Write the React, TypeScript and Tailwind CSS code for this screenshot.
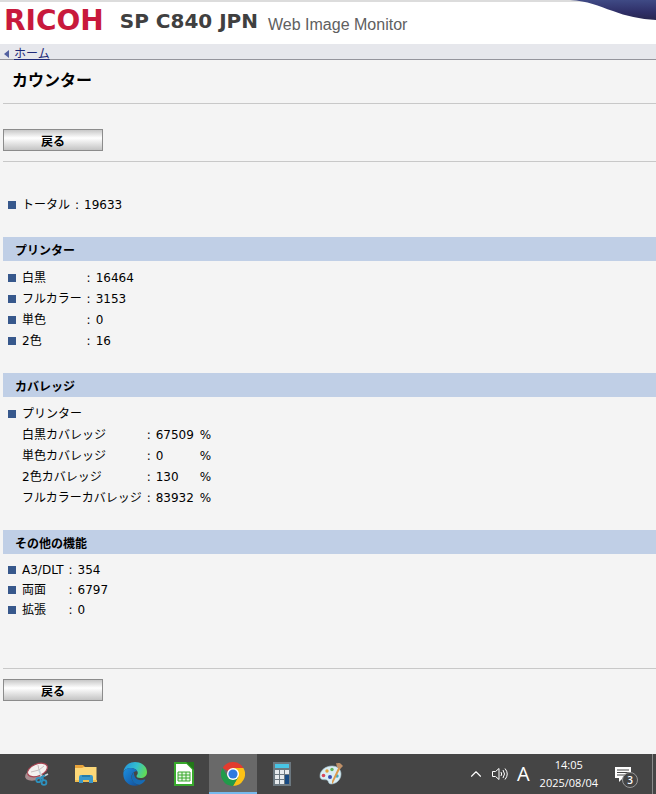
import type { ReactNode } from "react";
import { ChevronUp } from "lucide-react";

type Row = { label: string; value: string; bullet?: boolean; unit?: string };

const printerRows: Row[] = [
  { label: "白黒", value: "16464", bullet: true },
  { label: "フルカラー", value: "3153", bullet: true },
  { label: "単色", value: "0", bullet: true },
  { label: "2色", value: "16", bullet: true },
];

const coverageRows: Row[] = [
  { label: "白黒カバレッジ", value: "67509", unit: "%" },
  { label: "単色カバレッジ", value: "0", unit: "%" },
  { label: "2色カバレッジ", value: "130", unit: "%" },
  { label: "フルカラーカバレッジ", value: "83932", unit: "%" },
];

const otherRows: Row[] = [
  { label: "A3/DLT", value: "354", bullet: true },
  { label: "両面", value: "6797", bullet: true },
  { label: "拡張", value: "0", bullet: true },
];

function Bullet() {
  return <span className="block size-2 bg-[#37588c]" />;
}

function CounterTable({ rows, heading, compact }: { rows: Row[]; heading?: string; compact?: boolean }) {
  return (
    <table className="border-collapse text-xs text-black">
      <tbody>
        {heading && (
          <tr className="h-[21px]">
            <td className="w-[19px] pl-[5px]"><Bullet /></td>
            <th colSpan={4} scope="colgroup" className="p-0 text-left font-normal">{heading}</th>
          </tr>
        )}
        {rows.map((row) => (
          <tr key={row.label} className={compact ? "h-5" : "h-[21px]"}>
            <td className="w-[19px] min-w-[19px] pl-[5px]">{row.bullet && <Bullet />}</td>
            <th scope="row" className="p-0 text-left font-normal whitespace-nowrap">{row.label}</th>
            <td className="w-3.5 min-w-3.5 p-0 text-center">:</td>
            <td className="p-0">{row.value}</td>
            {row.unit && <td className="pl-1.5">{row.unit}</td>}
          </tr>
        ))}
      </tbody>
    </table>
  );
}

function Section({ title, children }: { title: string; children: ReactNode }) {
  return (
    <section>
      <h2 className="mb-1.5 flex h-6 items-center bg-[#c0cfe6] pt-1 pl-3 text-xs font-bold">{title}</h2>
      {children}
    </section>
  );
}

function BackButton() {
  return (
    <button
      type="button"
      className="flex h-[22px] w-[100px] items-center justify-center border border-[#8c8c8c] bg-linear-to-b from-[#c8c8c8] via-white via-40% to-[#c4c4c4] pt-1 text-xs font-bold text-black"
    >
      戻る
    </button>
  );
}

/* Taskbar icons */
function SnippingIcon() {
  return (
    <svg viewBox="0 0 24 24" className="size-6">
      <ellipse cx="9" cy="13" rx="9" ry="5.500" transform="rotate(-14 9 13)" fill="#a68c8f" />
      <ellipse cx="12.500" cy="8" rx="10.500" ry="6" transform="rotate(-22 12.500 8)" fill="#f4f1ef" stroke="#a84452" strokeWidth="1.200" />
      <path d="M6 10l8-2 5-4M14 8l-1-5" stroke="#c9bcbd" strokeWidth="1" fill="none" />
      <path d="M14 8l3.500 9M23 12l-8 4" stroke="#c5d3da" strokeWidth="1.800" />
      <path d="M16.500 14l2 5M20 13.500l-5 3" stroke="#2d91be" strokeWidth="2" />
      <circle cx="19" cy="20.500" r="2.400" fill="none" stroke="#2d91be" strokeWidth="1.800" />
      <circle cx="13.500" cy="18" r="2.200" fill="none" stroke="#2d91be" strokeWidth="1.800" />
    </svg>
  );
}

function FolderIcon() {
  return (
    <svg viewBox="0 0 24 24" className="size-6">
      <path d="M1 3h8l2 2h11v5H1z" fill="#e8a33a" />
      <path d="M1 6h7l2-1h12.500v15H1z" fill="#fcd879" />
      <path d="M1 18h22v2H1z" fill="#efbd4f" />
      <path d="M5 21v-6q0-2 2-2h10q2 0 2 2v6h-4v-3H9v3z" fill="#3a98ca" />
      <path d="M8 13h8v2H8z" fill="#257caa" />
    </svg>
  );
}

function EdgeIcon() {
  return (
    <svg viewBox="0 0 24 24" className="size-6">
      <defs>
        <linearGradient id="edge-top" x1="0" y1="0.300" x2="1" y2="0.600">
          <stop offset="0" stopColor="#2496dc" />
          <stop offset="0.500" stopColor="#33bfcf" />
          <stop offset="1" stopColor="#64dc50" />
        </linearGradient>
        <linearGradient id="edge-low" x1="0" y1="0" x2="1" y2="1">
          <stop offset="0" stopColor="#1c8fdf" />
          <stop offset="1" stopColor="#124d99" />
        </linearGradient>
      </defs>
      <path d="M0.500 10C1 4 6 0 12 0c7 0 12 4.500 12 10 0 4-3 6-6.500 6-3 0-4-1-4-2 0-.8 1.300-1.200 1.300-3C14.800 8.500 12 6 8 6 4 6 1.200 8 .5 10z" fill="url(#edge-top)" />
      <path d="M.5 10C2 7 5 5.800 8 6c3 .1 5.500 1.500 6.500 3.500C12 8.500 8.500 11 8.500 15c0 4 4 8 8 7.800C8 26-1 20 .5 10z" fill="url(#edge-low)" />
      <path d="M11 10c-4 3-3 12 5.500 12.800 2.500-.8 4.500-2.400 5.700-4.600.4-.7-.2-1-.8-.7-5 2.200-11-.5-10.400-7.500z" fill="#166bb5" />
    </svg>
  );
}

function CalcSheetIcon() {
  return (
    <svg viewBox="0 0 24 24" className="size-6">
      <path d="M3 1h12l6 6v16H3z" fill="#fff" stroke="#38a82c" strokeWidth="2" />
      <path d="M14 0h8v8z" fill="#227819" />
      <path d="M6 10h12v9H6z" fill="#e8f7e5" stroke="#38a82c" />
      <path d="M6 13h12M6 16h12M10 10v9M14 10v9" stroke="#38a82c" />
    </svg>
  );
}

function ChromeIcon() {
  return (
    <svg viewBox="0 0 24 24" className="size-6">
      <path d="M12 12L1.600 6A12 12 0 0 1 22.400 6z" fill="#e33b2e" />
      <path d="M12 12V6h10.400A12 12 0 0 1 12 24l5.200-9z" fill="#fbc116" />
      <path d="M12 12l5.200 3L12 24A12 12 0 0 1 1.600 6l5.200 9z" fill="#219b4a" />
      <circle cx="12" cy="12" r="6" fill="#fff" />
      <circle cx="12" cy="12" r="4.600" fill="#2f79df" />
    </svg>
  );
}

function CalculatorIcon() {
  return (
    <svg viewBox="0 0 24 24" className="size-6">
      <path d="M3 0h18v24H3z" fill="#6c7880" />
      <path d="M5 2h14v4H5z" fill="#48c5e6" />
      <path d="M5 8h4v4H5zM10 8h4v4h-4zM15 8h4v4h-4zM5 13h4v4H5zM10 13h4v4h-4zM5 18h4v4H5zM10 18h4v4h-4z" fill="#e6eaed" />
      <path d="M15 13h4v9h-4z" fill="#174a83" />
    </svg>
  );
}

function PaintIcon() {
  return (
    <svg viewBox="0 0 24 24" className="size-6">
      <path d="M1 14C1 8 7 4 13 4c5 0 9 3 9 8 0 6-5 10-10 10-3 0-2-3-4-4-2-.8-7 1-7-4z" fill="#d9edf4" stroke="#a9c8d4" strokeWidth="0.600" />
      <circle cx="4.500" cy="13.500" r="1.800" fill="#d6465a" />
      <circle cx="8" cy="9" r="1.700" fill="#e2a13a" />
      <circle cx="13" cy="7.500" r="1.700" fill="#62b258" />
      <circle cx="11" cy="15" r="2" fill="#394cb0" />
      <circle cx="18" cy="14" r="1.700" fill="#42a8c2" />
      <path d="M20 4l2 1-8 16-1 1V19z" fill="#dd9a4c" />
      <path d="M17 1c2 1 3-1 5 1l2 2-3 3-3-2z" fill="#bf9068" />
    </svg>
  );
}

function SpeakerIcon() {
  return (
    <svg viewBox="0 0 18 16" className="h-4 w-[18px]" fill="none" stroke="#fff">
      <path d="M1.500 5.500h3l3.500-3v11l-3.500-3h-3z" />
      <path d="M10 6q1.300 2 0 4M12 4q3 4 0 8M14 2.500q4.500 5.500 0 11" />
    </svg>
  );
}

function NoticeIcon() {
  return (
    <svg viewBox="0 0 18 16" className="h-4 w-[18px]">
      <path d="M1 1h16v11H9l-4 4v-4H1z" fill="#fff" />
      <path d="M3 4h12M3 6.500h12M3 9h8" stroke="#454545" />
    </svg>
  );
}

const apps = [
  { name: "Snipping Tool", icon: <SnippingIcon /> },
  { name: "エクスプローラー", icon: <FolderIcon /> },
  { name: "Microsoft Edge", icon: <EdgeIcon /> },
  { name: "LibreOffice Calc", icon: <CalcSheetIcon /> },
  { name: "Google Chrome", icon: <ChromeIcon />, active: true },
  { name: "電卓", icon: <CalculatorIcon /> },
  { name: "ペイント", icon: <PaintIcon /> },
];

function Taskbar() {
  return (
    <footer className="flex h-10 items-stretch justify-between bg-[#454545] font-['Open_Sans','Noto_Sans_CJK_JP',sans-serif] text-white">
      <nav className="flex pl-[13px]">
        {apps.map((app) => (
          <button
            key={app.name}
            type="button"
            aria-label={app.name}
            className={
              app.active
                ? "mr-px flex w-12 items-center justify-center border-b-2 border-[#76b9ed] bg-[#696969] pt-0.5"
                : "mr-px flex w-12 items-center justify-center"
            }
          >
            {app.icon}
          </button>
        ))}
      </nav>
      <div className="flex items-center">
        <button type="button" aria-label="隠れているインジケーター" className="mr-1.5">
          <ChevronUp className="size-[18px]" strokeWidth={1.5} />
        </button>
        <button type="button" aria-label="音量" className="mr-2">
          <SpeakerIcon />
        </button>
        <button type="button" className="mr-2.5 text-xl">A</button>
        <div className="mr-4 text-center text-[11px] leading-[18px]">
          <div>14:05</div>
          <div>2025/08/04</div>
        </div>
        <button type="button" aria-label="通知" className="relative mr-5">
          <NoticeIcon />
          <span className="absolute top-1.5 left-2 flex size-4 items-center justify-center rounded-full border border-[#999] bg-[#454545] text-[10px] font-semibold">3</span>
        </button>
        <span className="h-full w-1 border-l border-[#8a8a8a]" />
      </div>
    </footer>
  );
}

export default function App() {
  return (
    <div className="flex min-h-screen flex-col bg-[#f4f4f4] font-['DejaVu_Sans','Noto_Sans_CJK_JP',sans-serif] text-black">
      <header className="relative flex h-11 items-center border-t-2 border-[#dcdcdc] bg-white pb-1 pl-1">
        <span className="text-[28px] leading-8 font-bold text-[#c8193c]">RICOH</span>
        <span className="ml-4 text-xl font-bold text-[#404040]">SP C840 JPN</span>
        <span className="ml-2.5 pt-2 font-['Liberation_Sans',sans-serif] text-base text-[#606060]">Web Image Monitor</span>
        <svg viewBox="0 0 86 20" className="absolute -top-0.5 right-0 h-5 w-[86px]">
          <defs>
            <linearGradient id="swoosh" x1="0" y1="0" x2="0" y2="1">
              <stop offset="0" stopColor="#3f4a85" />
              <stop offset="0.600" stopColor="#2f2f68" />
              <stop offset="1" stopColor="#28264f" />
            </linearGradient>
          </defs>
          <path d="M0 0C18 1 28 6 43 11C56 16 70 19 86 20V0z" fill="url(#swoosh)" />
        </svg>
      </header>

      <nav className="flex h-4 items-center border-b border-[#94949c] bg-[#e6e7ec] pl-1 text-xs">
        <svg viewBox="0 0 5 8" className="mt-1 mr-[5px] h-2 w-[5px]">
          <path d="M5 0v8L0 4z" fill="#5260a0" />
        </svg>
        <a href="#home" className="pt-1 text-[#1f2a78] underline">ホーム</a>
      </nav>

      <main className="flex-1 pl-[3px]">
        <h1 className="flex h-11 items-center border-b border-[#c8c8c8] pb-0.5 pl-[9px] text-base font-bold">カウンター</h1>

        <div className="border-b border-[#c8c8c8] pt-[25px] pb-2.5">
          <BackButton />
        </div>

        <div className="pt-8 pb-[22px]">
          <CounterTable rows={[{ label: "トータル", value: "19633", bullet: true }]} />
        </div>

        <div className="flex flex-col gap-[22px]">
          <Section title="プリンター">
            <CounterTable rows={printerRows} />
          </Section>
          <Section title="カバレッジ">
            <CounterTable heading="プリンター" rows={coverageRows} />
          </Section>
          <Section title="その他の機能">
            <CounterTable rows={otherRows} compact />
          </Section>
        </div>

        <div className="mt-12 border-t border-[#c8c8c8] pt-2.5">
          <BackButton />
        </div>
      </main>

      <Taskbar />
    </div>
  );
}
